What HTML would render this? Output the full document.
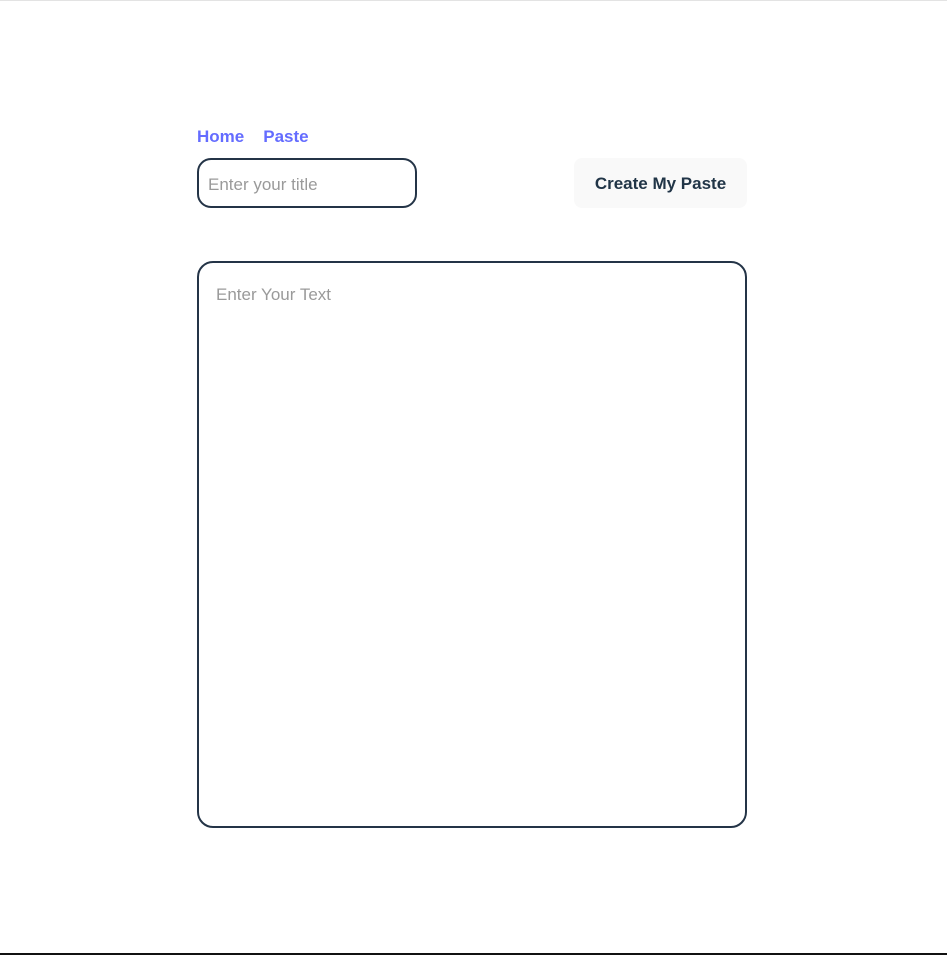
<!DOCTYPE html>
<html><head><style>
html,body{margin:0;padding:0;background:#fff;}
body{width:947px;height:955px;position:relative;overflow:hidden;font-family:"Liberation Sans",sans-serif;}
.top{position:absolute;left:0;top:0;width:947px;height:1px;background:#e3e3e3;}
.bot{position:absolute;left:0;top:953px;width:947px;height:2px;background:#111;}
.nav{position:absolute;top:127px;left:197px;font-size:17px;font-weight:bold;color:#646cff;}
.nav span{margin-right:19px;}
.inp{position:absolute;left:197px;top:158px;width:216px;height:46px;border:2px solid #243447;border-radius:14px;}
.inp span{position:absolute;left:9px;top:15px;font-size:17px;color:#9a9a9a;}
.btn{position:absolute;left:574px;top:158px;width:173px;height:50px;background:#f9f9f9;border-radius:8px;font-size:17px;font-weight:bold;color:#213547;text-align:center;line-height:52px;}
.ta{position:absolute;left:197px;top:261px;width:546px;height:563px;border:2px solid #243447;border-radius:16px;}
.ta span{position:absolute;left:17px;top:22px;font-size:17px;color:#9a9a9a;}
</style></head><body>
<div class="top"></div>
<div class="nav"><span>Home</span><span>Paste</span></div>
<div class="inp"><span>Enter your title</span></div>
<div class="btn">Create My Paste</div>
<div class="ta"><span>Enter Your Text</span></div>
<div class="bot"></div>
</body></html>
